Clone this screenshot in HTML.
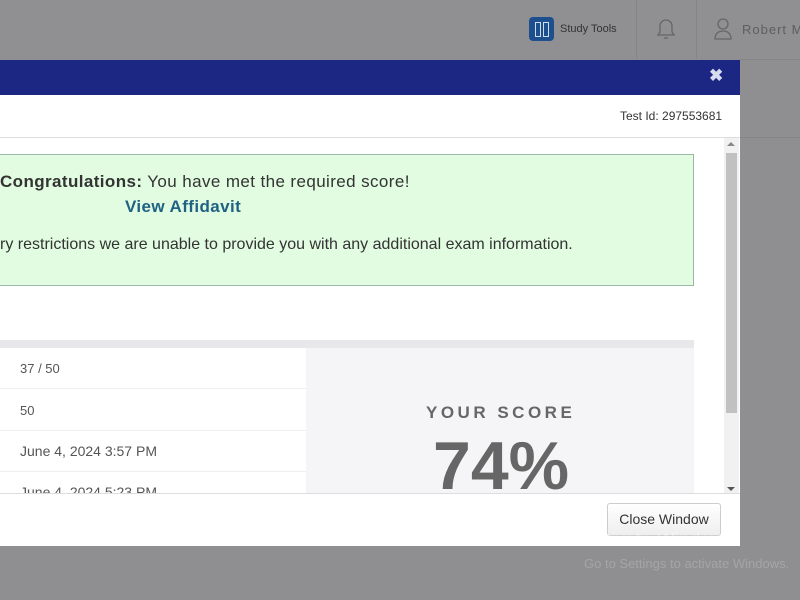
<!DOCTYPE html>
<html><head><style>
body{margin:0;width:800px;height:600px;background:#8f8e91;font-family:"Liberation Sans",sans-serif;position:relative;overflow:hidden}
.abs{position:absolute;white-space:nowrap}
</style></head><body>
<div class="abs" style="left:0;top:0;width:800px;height:59px;background:#908f92"></div>
<div class="abs" style="left:636px;top:0;width:1px;height:59px;background:#858487"></div>
<div class="abs" style="left:696px;top:0;width:1px;height:59px;background:#858487"></div>
<div class="abs" style="left:740px;top:59px;width:60px;height:1px;background:#858487"></div>
<div class="abs" style="left:740px;top:137px;width:60px;height:1px;background:#858487"></div>
<div class="abs" style="left:529px;top:17px;width:25px;height:24px;background:#1d4f8e;border-radius:4px"></div>
<div class="abs" style="left:535px;top:22px;width:4px;height:13px;border:1px solid #cde"></div>
<div class="abs" style="left:543px;top:22px;width:4px;height:13px;border:1px solid #cde"></div>
<div class="abs" style="left:560px;top:23px;font-size:11px;color:#333">Study Tools</div>
<svg class="abs" style="left:654px;top:16px" width="24" height="26" viewBox="0 0 24 26"><path d="M4 19h16l-2-3V10a6 6 0 0 0-12 0v6z M10 22h4" fill="none" stroke="#666" stroke-width="1.3"/></svg>
<svg class="abs" style="left:713px;top:17px" width="20" height="24" viewBox="0 0 20 24"><circle cx="10" cy="7" r="5" fill="none" stroke="#666" stroke-width="1.3"/><path d="M2 22c0-5 3-8 8-8s8 3 8 8z" fill="none" stroke="#666" stroke-width="1.3"/></svg>
<div class="abs" style="left:742px;top:22px;font-size:13px;color:#5e5e60;letter-spacing:1px">Robert M</div>

<div class="abs" style="left:0;top:60px;width:740px;height:486px;background:#fff">
 <div class="abs" style="left:0;top:0;width:740px;height:35px;background:#1c2683"></div>
 <div class="abs" style="left:709px;top:6px;color:#d8dcf0;font-size:17px;font-weight:bold">✖</div>
 <div class="abs" style="left:620px;top:49px;font-size:12px;color:#333">Test Id: 297553681</div>
 <div class="abs" style="left:0;top:77px;width:740px;height:1px;background:#ddd"></div>
 <div class="abs" style="left:0;top:94px;width:693px;height:130px;background:#e2fce2;border:1px solid #9cb8a8;border-left:none"></div>
 <div class="abs" style="left:0;top:112px;font-size:17px;color:#333;letter-spacing:0.4px"><b>Congratulations:</b> You have met the required score!</div>
 <div class="abs" style="left:125px;top:137px;font-size:17px;color:#1f6283;font-weight:bold;letter-spacing:0.4px">View Affidavit</div>
 <div class="abs" style="left:0;top:176px;font-size:16px;color:#333">ry restrictions we are unable to provide you with any additional exam information.</div>
 <div class="abs" style="left:0;top:280px;width:694px;height:8px;background:#e8e8ea"></div>
 <div class="abs" style="left:306px;top:288px;width:388px;height:145px;background:#f5f5f7"></div>
 <div class="abs" style="left:0;top:328px;width:306px;height:1px;background:#eee"></div>
 <div class="abs" style="left:0;top:370px;width:306px;height:1px;background:#eee"></div>
 <div class="abs" style="left:0;top:411px;width:306px;height:1px;background:#eee"></div>
 <div class="abs" style="left:20px;top:301px;font-size:13px;color:#555">37 / 50</div>
 <div class="abs" style="left:20px;top:343px;font-size:13px;color:#555">50</div>
 <div class="abs" style="left:20px;top:383px;font-size:14px;color:#555">June 4, 2024 3:57 PM</div>
 <div class="abs" style="left:20px;top:424px;font-size:14px;color:#555;height:9px;overflow:hidden">June 4, 2024 5:23 PM</div>
 <div class="abs" style="left:426px;top:343px;font-size:17px;color:#666;font-weight:bold;letter-spacing:3.5px">YOUR SCORE</div>
 <div class="abs" style="left:433px;top:365px;font-size:68px;color:#666;font-weight:bold;height:68px;overflow:hidden;line-height:82px">74%</div>
 <div class="abs" style="left:724px;top:78px;width:15px;height:355px;background:#f1f1f1"></div>
 <div class="abs" style="left:726px;top:93px;width:11px;height:260px;background:#c1c1c1"></div>
 <div class="abs" style="left:727px;top:82px;width:0;height:0;border:4px solid transparent;border-bottom-color:#888;border-top:none"></div>
 <div class="abs" style="left:727px;top:427px;width:0;height:0;border:4px solid transparent;border-top-color:#555;border-bottom:none"></div>
 <div class="abs" style="left:0;top:433px;width:740px;height:1px;background:#ddd"></div>
 <div class="abs" style="left:607px;top:443px;width:112px;height:31px;border:1px solid #ccc;border-radius:3px;background:linear-gradient(#fff,#eee);font-size:14px;color:#333;text-align:center;line-height:31px">Close Window</div>
</div>
<div class="abs" style="left:584px;top:530px;font-size:19px;color:rgba(255,255,255,0.35)">Activate Windows</div>
<div class="abs" style="left:584px;top:556px;font-size:13px;color:rgba(255,255,255,0.2)">Go to Settings to activate Windows.</div>
</body></html>
